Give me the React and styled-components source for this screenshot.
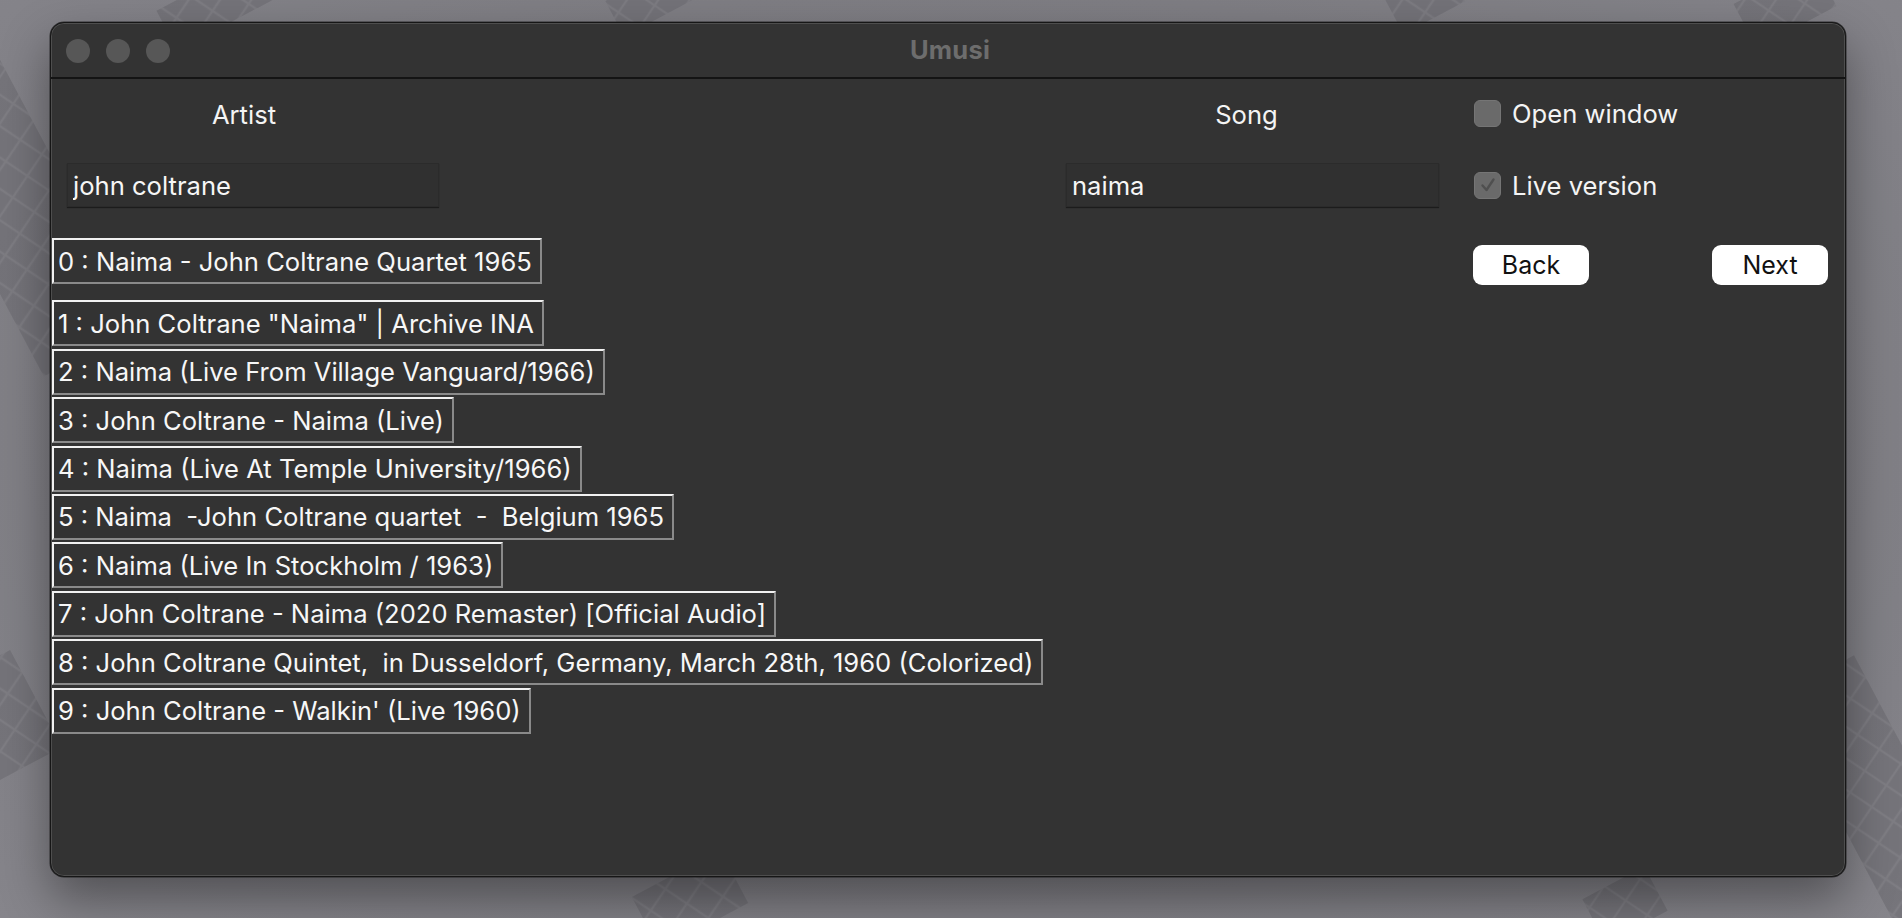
import React from "react";
import styled, { createGlobalStyle } from "styled-components";

const GlobalStyle = createGlobalStyle`
  html, body {
    margin: 0;
    padding: 0;
    height: 100%;
  }
  body {
    background: #7b7a80;
    font-family: Inter, "Noto Sans", "Liberation Sans", sans-serif;
    overflow: hidden;
  }
  #root {
    height: 100%;
  }
`;

const Desktop = styled.div`
  position: relative;
  width: 100%;
  height: 100%;
  box-sizing: border-box;
  padding: 22px 56px 41px 50px;
  background: radial-gradient(ellipse at 50% 45%, #77767c 0%, #7e7d83 60%, #86858b 100%);
`;

const Wallpaper = styled.svg`
  position: absolute;
  inset: 0;
  width: 100%;
  height: 100%;
`;

const Window = styled.div`
  position: relative;
  height: 100%;
  display: flex;
  flex-direction: column;
  box-sizing: border-box;
  background: #333333;
  border: 1px solid #161616;
  border-radius: 14px;
  box-shadow: inset 0 0 0 1px #4e4e4e, 0 22px 48px rgba(0, 0, 0, 0.38),
    0 0 0 0.5px rgba(0, 0, 0, 0.6);
  overflow: hidden;
`;

const TitleBar = styled.div`
  position: relative;
  height: 54px;
  flex-shrink: 0;
  display: flex;
  align-items: center;
  justify-content: center;
  border-bottom: 2px solid #141414;
`;

const Lights = styled.div`
  position: absolute;
  left: 15px;
  top: 16px;
  display: flex;
  gap: 16px;
`;

const Light = styled.span`
  width: 24px;
  height: 24px;
  border-radius: 50%;
  background: #575757;
`;

const Title = styled.div`
  color: #6d6d6d;
  font-size: 25.5px;
  font-weight: 700;
  letter-spacing: 0.2px;
  margin-left: 4px;
  margin-bottom: 2px;
`;

const Body = styled.div`
  flex: 1;
  display: flex;
`;

const Main = styled.div`
  flex: 1;
  display: flex;
  flex-direction: column;
`;

const FormRow = styled.div`
  display: grid;
  grid-template-columns: 372px 1fr 373px;
  padding: 0 33px 0 16px;
`;

const Field = styled.div`
  display: flex;
  flex-direction: column;
  grid-column: ${(p) => p.col};
`;

const Label = styled.div`
  height: 30px;
  line-height: 30px;
  margin-top: 21px;
  text-align: center;
  color: #f4f4f4;
  font-size: 25.6px;
  transform: translateX(${(p) => p.shift || 0}px);
`;

const Input = styled.input`
  box-sizing: border-box;
  margin-top: 33px;
  height: 44px;
  width: 100%;
  padding: 0 5px;
  background: #303030;
  border: 1px solid #2b2b2b;
  box-shadow: 0 1px 1px rgba(0, 0, 0, 0.45);
  color: #f6f6f6;
  font-family: inherit;
  font-size: 25.6px;
  outline: none;
`;

const List = styled.div`
  display: flex;
  flex-direction: column;
  align-items: flex-start;
  gap: 2.4px;
  padding: 31px 0 0 1px;
`;

const Item = styled.div`
  box-sizing: border-box;
  height: 46px;
  margin-bottom: ${(p) => (p.first ? 14 : 0)}px;
  padding: 0 8px 0 4px;
  display: flex;
  align-items: center;
  white-space: pre;
  color: #f7f7f7;
  font-size: 25.6px;
  border-style: solid;
  border-width: 2px;
  border-color: #f1f1f1 #8a8a8a #8a8a8a #f1f1f1;
`;

const Side = styled.div`
  width: 373px;
  flex-shrink: 0;
  display: flex;
  flex-direction: column;
  box-sizing: border-box;
  padding: 20px 17px 0 1px;
`;

const CheckRow = styled.label`
  display: flex;
  align-items: center;
  gap: 11px;
  height: 28px;
  margin-bottom: ${(p) => p.gap || 0}px;
  color: #f4f4f4;
  font-size: 25.6px;
  padding-left: 1px;
`;

const Box = styled.span`
  width: 27px;
  height: 27px;
  box-sizing: border-box;
  border-radius: 6px;
  background: #6a6a6a;
  border: 1px solid #757575;
  display: flex;
  align-items: center;
  justify-content: center;
`;

const Buttons = styled.div`
  display: flex;
  justify-content: space-between;
  margin-top: 46px;
`;

const Button = styled.button`
  width: 116px;
  height: 40px;
  border: none;
  border-radius: 9px;
  background: #ffffff;
  color: #111;
  font-family: inherit;
  font-size: 25px;
  padding: 0;
`;

const results = [
  "0 : Naima - John Coltrane Quartet 1965",
  '1 : John Coltrane "Naima" | Archive INA',
  "2 : Naima (Live From Village Vanguard/1966)",
  "3 : John Coltrane - Naima (Live)",
  "4 : Naima (Live At Temple University/1966)",
  "5 : Naima  -John Coltrane quartet  -  Belgium 1965",
  "6 : Naima (Live In Stockholm / 1963)",
  "7 : John Coltrane - Naima (2020 Remaster) [Official Audio]",
  "8 : John Coltrane Quintet,  in Dusseldorf, Germany, March 28th, 1960 (Colorized)",
  "9 : John Coltrane - Walkin' (Live 1960)",
];

// patches of tiles on the wallpaper, in page coordinates
const tilePatches = [
  { x: -40, y: 40, w: 110, h: 330 },
  { x: -30, y: 660, w: 70, h: 110 },
  { x: 160, y: -20, w: 120, h: 45 },
  { x: 610, y: -20, w: 80, h: 40 },
  { x: 1390, y: -20, w: 70, h: 40 },
  { x: 1740, y: -20, w: 90, h: 50 },
  { x: 1835, y: 660, w: 90, h: 280 },
  { x: 640, y: 870, w: 100, h: 60 },
  { x: 1590, y: 880, w: 70, h: 50 },
];

const Check = () => (
  <svg width="18" height="18" viewBox="0 0 18 18">
    <path
      d="M3.5 9.5 L7.5 14 L14.5 3.5"
      fill="none"
      stroke="#4f4f4f"
      strokeWidth="2.4"
      strokeLinecap="round"
      strokeLinejoin="round"
    />
  </svg>
);

export default function App() {
  return (
    <>
      <GlobalStyle />
      <Desktop>
        <Wallpaper viewBox="0 0 1902 918" preserveAspectRatio="none">
          <defs>
            <pattern
              id="tiles"
              width="26"
              height="26"
              patternUnits="userSpaceOnUse"
              patternTransform="rotate(-28)"
            >
              <rect width="26" height="26" fill="#7a797f" />
              <rect x="1.2" y="1.2" width="23.6" height="23.6" fill="#6b6a70" />
            </pattern>
          </defs>
          {tilePatches.map((t, i) => (
            <rect
              key={i}
              x={t.x}
              y={t.y}
              width={t.w}
              height={t.h}
              fill="url(#tiles)"
              opacity="0.6"
              transform={`rotate(-28 ${t.x + t.w / 2} ${t.y + t.h / 2})`}
            />
          ))}
        </Wallpaper>
        <Window>
          <TitleBar>
            <Lights>
              <Light />
              <Light />
              <Light />
            </Lights>
            <Title>Umusi</Title>
          </TitleBar>
          <Body>
            <Main>
              <FormRow>
                <Field col={1}>
                  <Label shift={-9}>Artist</Label>
                  <Input defaultValue="john coltrane" />
                </Field>
                <Field col={3}>
                  <Label shift={-6}>Song</Label>
                  <Input defaultValue="naima" />
                </Field>
              </FormRow>
              <List>
                {results.map((r, i) => (
                  <Item key={i} first={i === 0}>
                    {r}
                  </Item>
                ))}
              </List>
            </Main>
            <Side>
              <CheckRow gap={44}>
                <Box />
                Open window
              </CheckRow>
              <CheckRow>
                <Box>
                  <Check />
                </Box>
                Live version
              </CheckRow>
              <Buttons>
                <Button>Back</Button>
                <Button>Next</Button>
              </Buttons>
            </Side>
          </Body>
        </Window>
      </Desktop>
    </>
  );
}
